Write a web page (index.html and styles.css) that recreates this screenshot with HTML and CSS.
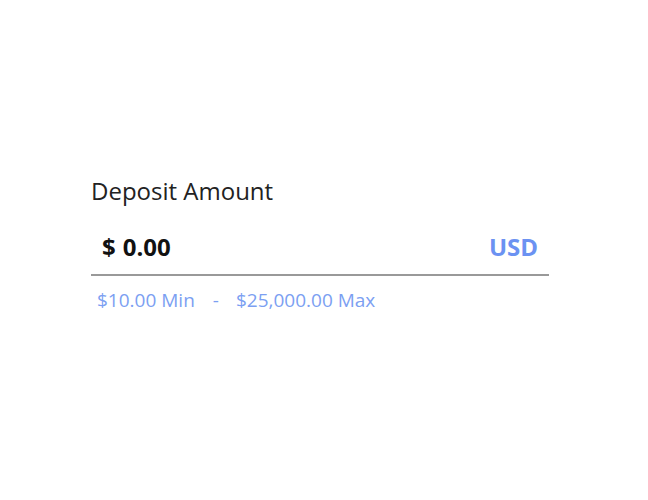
FILE: index.html
```html
<!DOCTYPE html>
<html>
<head>
  <meta charset="UTF-8">
  <title>Deposit</title>
  <link rel="stylesheet" href="styles.css">
</head>
<body>
  <div class="deposit">
    <label class="deposit-label" for="amount">Deposit Amount</label>
    <div class="amount-row">
      <span class="amount-value"><span class="symbol">$</span>0.00</span>
      <span class="currency">USD</span>
    </div>
    <div class="limits">
      <span>$10.00 Min</span>
      <span class="sep">-</span>
      <span>$25,000.00 Max</span>
    </div>
  </div>
</body>
</html>
```

FILE: styles.css
```css
body {
  margin: 0;
  font-family: 'Open Sans', sans-serif;
  background-color: #fff;
  color: #222;
}

.deposit {
  width: 458px;
  margin-left: 91px;
  padding-top: 175px;
}

.deposit-label {
  display: block;
  font-size: 24px;
  line-height: 32px;
  color: #222;
}

.amount-row {
  display: flex;
  justify-content: space-between;
  align-items: center;
  height: 56px;
  padding: 0 11px;
  border-bottom: 2px solid #999;
  margin-top: 11px;
}

.amount-value {
  font-size: 24px;
  font-weight: 700;
  color: #111;
}

.symbol {
  margin-right: 7px;
}

.currency {
  font-size: 24px;
  font-weight: 700;
  color: #6b92f2;
}

.limits {
  display: flex;
  gap: 18px;
  padding: 11px 6px 0;
  font-size: 19px;
  line-height: 26px;
  color: #7c9ff2;
}

.sep {
  margin-right: -1px;
}
```
